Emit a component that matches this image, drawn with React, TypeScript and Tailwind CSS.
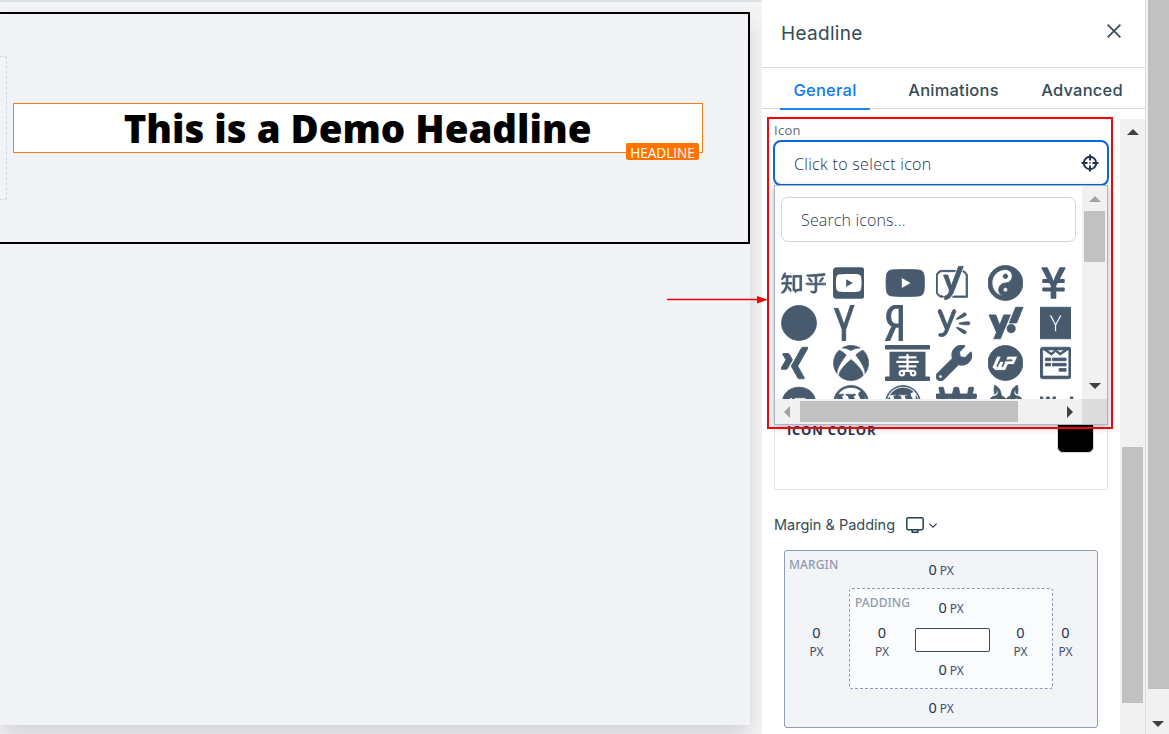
import React from "react";
import clsx from "clsx";
import type { IconType } from "react-icons";
import {
  FaCircle,
  FaWodu,
  FaWolfPackBattalion,
  FaWonSign,
  FaWordpress,
  FaWordpressSimple,
  FaWpbeginner,
  FaWpforms,
  FaWpressr,
  FaWrench,
  FaXRay,
  FaXbox,
  FaXing,
  FaYCombinator,
  FaYahoo,
  FaYammer,
  FaYandex,
  FaYandexInternational,
  FaYenSign,
  FaYinYang,
  FaYoast,
  FaYoutube,
  FaYoutubeSquare,
  FaZhihu,
} from "react-icons/fa";

const ICONS: IconType[] = [
  FaZhihu, FaYoutubeSquare, FaYoutube, FaYoast, FaYinYang, FaYenSign,
  FaCircle, FaYandexInternational, FaYandex, FaYammer, FaYahoo, FaYCombinator,
  FaXing, FaXbox, FaXRay, FaWrench, FaWpressr, FaWpforms,
  FaWpbeginner, FaWordpressSimple, FaWordpress, FaWonSign, FaWolfPackBattalion, FaWodu,
];

// Fine details fill in when these get an outline
const THIN_ICONS: IconType[] = [FaYenSign, FaXRay, FaYoutubeSquare];

interface ArrowProps {
  className?: string;
}

function Arrow({ className }: ArrowProps) {
  return (
    <svg viewBox="0 0 12 6" className={clsx("h-[6px] w-[12px] shrink-0", className)} fill="currentColor">
      <path d="M6 0L12 6H0z" />
    </svg>
  );
}

interface PxValueProps {
  stacked?: boolean;
}

function PxValue({ stacked }: PxValueProps) {
  return (
    <div
      className={clsx(
        "flex text-[#26334f]",
        stacked ? "-ml-px flex-col items-center gap-[2px]" : "items-baseline gap-[3px]"
      )}
    >
      <span className="text-[14.5px] leading-[18px]">0</span>
      <span className="text-[12px] leading-[18px] tracking-[-0.1px] text-[#44516c]">PX</span>
    </div>
  );
}

function Canvas() {
  return (
    <main className="w-[762px] shrink-0 overflow-hidden border-t-2 border-[#dfe0e2] bg-[#f3f4f6] pt-[10px]">
      <div className="h-[713px] w-[750px] bg-[#f2f3f6] shadow-[0_10px_22px_-2px_rgba(0,0,0,0.16)]">
        <section className="flex h-[232px] border-2 border-l-0 border-black">
          <div className="mt-[42px] h-[144px] w-[7px] shrink-0 border border-l-0 border-dashed border-[#d5d8e8]" />
          <div className="relative mt-[89px] ml-[6px] flex h-[50px] w-[690px] items-center justify-center border border-[#f97b16] bg-white">
            <h1 className="pr-[1px] font-['Open_Sans'] text-[38.4px] leading-none font-extrabold whitespace-nowrap text-black">
              This is a Demo Headline
            </h1>
            <span className="absolute right-[3px] -bottom-[8px] flex h-[17px] w-[73px] items-center justify-center rounded-[2px] bg-[#ff7300] pt-[3px] font-['Open_Sans'] text-[13.6px] leading-none text-white">
              HEADLINE
            </span>
          </div>
        </section>
      </div>
    </main>
  );
}

function IconDropdown() {
  return (
    <div className="absolute top-[66px] left-[12px] z-10 flex h-[240px] w-[334px] flex-col border border-[#a9b4cc] bg-white shadow-[0_2px_7px_rgba(0,0,0,0.3)]">
      <div className="flex h-[213px]">
        <div className="w-[307px] overflow-hidden pt-[11px] pl-[6px]">
          <div className="flex h-[45px] w-[295px] items-center rounded-[7px] border border-[#cfd4de] pl-[19px] font-['Open_Sans'] text-[16px] font-light tracking-[0.15px] text-[#2f3a52]">
            Search icons...
          </div>
          <div className="mt-[22.5px] grid grid-cols-[repeat(6,51.8px)] gap-y-1 text-[#475a6e]">
            {ICONS.map((Icon, i) => (
              <Icon
                key={i}
                size="auto"
                stroke="currentColor"
                strokeWidth={THIN_ICONS.includes(Icon) ? 0 : 12}
                className="h-9 w-auto"
              />
            ))}
          </div>
        </div>
        <div className="flex w-[25px] flex-col items-center bg-[#f1f1f1] pt-[10px] pb-[10px]">
          <Arrow className="text-[#a3a3a3]" />
          <div className="mt-[9px] mb-auto h-[51px] w-[21px] bg-[#c1c1c1]" />
          <Arrow className="rotate-180 text-[#404040]" />
        </div>
      </div>
      <div className="flex h-[25px]">
        <div className="flex w-[307px] items-center bg-[#f1f1f1] pr-[6px] pl-[6px]">
          <Arrow className="-rotate-90 text-[#a3a3a3]" />
          <div className="mr-auto ml-[7px] h-[21px] w-[218px] bg-[#c1c1c1]" />
          <Arrow className="rotate-90 text-[#404040]" />
        </div>
        <div className="w-[25px] bg-[#dcdcdc]" />
      </div>
    </div>
  );
}

function SpacingBox() {
  return (
    <div className="relative mt-[14px] ml-[10px] grid h-[178px] w-[314px] grid-cols-[64px_204px_44px] grid-rows-[37px_101px_38px] rounded-[3px] border border-[#8d9bb5] bg-[#f2f4f8] font-['Noto_Sans']">
      <span className="absolute top-[5px] left-[4px] text-[12px] leading-[17px] font-medium tracking-[0.1px] text-[#8f9bb2]">MARGIN</span>
      <div className="col-span-3 flex items-center justify-center">
        <PxValue />
      </div>
      <div className="flex items-center justify-center pt-[6px]">
        <PxValue stacked />
      </div>
      <div className="relative grid grid-cols-[65px_75px_62px] grid-rows-[39px_24px_36px] rounded-[3px] border border-dashed border-[#8d9bb5] bg-[#f9fbfd]">
        <span className="absolute top-[5px] left-[5px] text-[12px] leading-[17px] font-medium tracking-[0.1px] text-[#8f9bb2]">PADDING</span>
        <div className="col-span-3 flex items-center justify-center pb-[2px]">
          <PxValue />
        </div>
        <div className="flex items-center justify-center pt-[3px]">
          <PxValue stacked />
        </div>
        <div className="rounded-[2px] border border-[#3f4b63] bg-white" />
        <div className="flex items-center justify-center pt-[3px]">
          <PxValue stacked />
        </div>
        <div className="col-span-3 flex items-center justify-center">
          <PxValue />
        </div>
      </div>
      <div className="flex items-center justify-center pt-[6px] pr-[18px]">
        <PxValue stacked />
      </div>
      <div className="col-span-3 flex items-center justify-center">
        <PxValue />
      </div>
    </div>
  );
}

function SettingsPanel() {
  return (
    <aside className="flex w-[383px] shrink-0 flex-col bg-white font-['Inter'] text-[#344b57]">
      <header className="flex h-[68px] shrink-0 items-center justify-between border-b border-[#dadee2] pr-[24px] pl-[19px]">
        <h2 className="pt-[2px] text-[19px] tracking-[0.3px]">Headline</h2>
        <svg viewBox="0 0 14 14" className="mb-[5px] h-[14px] w-[14px]" fill="none" stroke="#344b57" strokeWidth="1.7">
          <path d="M.6.6l12.8 12.8M13.4.6L.6 13.4" />
        </svg>
      </header>
      <nav className="flex h-[41px] shrink-0 border-b border-[#d5dadd] pl-[18px] text-[16.5px] font-[450] tracking-[0.22px]">
        <button className="h-[42px] w-[90px] shrink-0 border-b-2 border-[#1a86ee] pt-[4px] text-[#0d7bf5]">General</button>
        <button className="ml-[26px] w-[115px] shrink-0 pt-[4px]">Animations</button>
        <button className="ml-[20px] w-[102px] shrink-0 pt-[4px]">Advanced</button>
      </nav>
      <div className="mt-[10px] flex min-h-0 flex-1">
        <div className="relative w-[358px] pl-[12px]">
          <label className="block pt-[3px] font-['Open_Sans'] text-[13px] leading-[17px] tracking-[0.3px] text-[#5d6b7c]">Icon</label>
          <div className="mt-[1px] -ml-px flex h-[46px] w-[336px] items-center justify-between rounded-[8px] border-2 border-[#0a68dc] pr-[8px] pl-[19px]">
            <span className="pt-[2px] font-['Open_Sans'] text-[16px] font-light tracking-[0.31px] text-[#26314a]">Click to select icon</span>
            <svg viewBox="0 0 18 18" className="h-[18px] w-[18px]" fill="none" stroke="#26334f" strokeWidth="2">
              <circle cx="9" cy="9" r="6.2" />
              <path d="M9 .5v6M9 11.5v6M.5 9h6M11.5 9h6" />
              <path d="M8.3 9h1.4" strokeWidth="1.4" />
            </svg>
          </div>
          <IconDropdown />
          <div className="flex h-[304px] w-[334px] justify-between rounded-[2px] border border-[#dfe2e8] pr-[13px] pl-[12px]">
            <span className="mt-[234px] font-['Open_Sans'] text-[13px] leading-[18px] font-bold tracking-[0.75px] text-[#2b3550]">
              ICON COLOR
            </span>
            <span className="mt-[229px] h-[37px] w-[37px] rounded-[6px] border border-[#d6dae0] bg-black" />
          </div>
          <div className="mt-[24px] flex h-[22px] items-center text-[14.5px]">
            <span>Margin &amp; Padding</span>
            <svg viewBox="0 0 18 16" className="ml-[11px] h-[16px] w-[18px]" fill="none" stroke="#1f4250" strokeWidth="1.5">
              <rect x=".8" y=".8" width="16.4" height="11.9" rx="1.4" />
              <path d="M6.2 13v2.2h5.6V13" />
            </svg>
            <svg viewBox="0 0 8 5" className="ml-[5px] h-[5px] w-[8px]" fill="none" stroke="#26334f" strokeWidth="1.2">
              <path d="M.4.6L4 4.1 7.6.6" />
            </svg>
          </div>
          <SpacingBox />
        </div>
        <div className="flex w-[25px] flex-col items-center bg-[#f1f1f1] pt-[10px]">
          <Arrow className="text-[#404040]" />
          <div className="mt-[312px] h-[256px] w-[21px] bg-[#c1c1c1]" />
        </div>
      </div>
    </aside>
  );
}

export default function App() {
  return (
    <div className="relative flex h-[734px] w-[1169px] overflow-hidden bg-white">
      <Canvas />
      <SettingsPanel />
      <div className="flex w-[24px] flex-col items-center border-l border-[#dedede] bg-[#f1f1f1] pl-[2px]">
        <div className="h-[689px] w-full shrink-0 bg-[#c1c1c1]" />
        <Arrow className="mt-[32px] mr-[2px] rotate-180 text-[#404040]" />
      </div>

      {/* Callout frame and pointer */}
      <div className="pointer-events-none absolute top-[117px] left-[767px] z-20 h-[312px] w-[346px] border-2 border-[#fb0007]" />
      <svg viewBox="0 0 101 8" className="absolute top-[296px] left-[667px] z-20 h-[8px] w-[101px]">
        <path d="M0 3.5h92" stroke="#fb0007" strokeWidth="1.4" />
        <path d="M90 0l11 3.8L90 7.4z" fill="#fb0007" />
      </svg>
    </div>
  );
}
